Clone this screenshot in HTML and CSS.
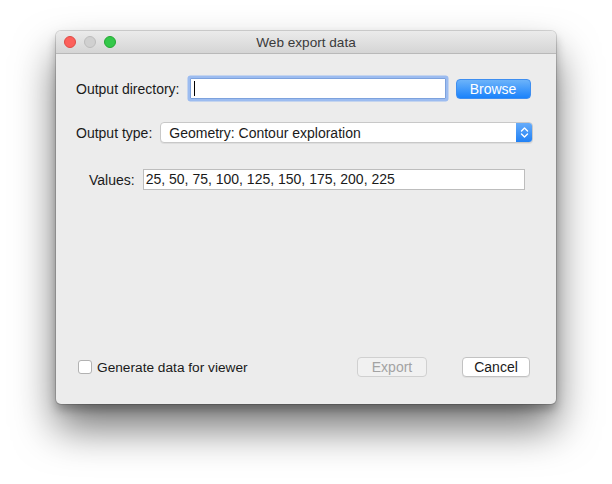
FILE: index.html
```html
<!DOCTYPE html>
<html>
<head>
<meta charset="utf-8">
<link rel="stylesheet" href="styles.css">
</head>
<body>
<div class="desk">
  <div class="window">
    <div class="titlebar">
      <div class="lights">
        <span class="light red"></span>
        <span class="light gray"></span>
        <span class="light green"></span>
      </div>
      <div class="title">Web export data</div>
    </div>
    <div class="content">
      <div class="row row1">
        <label class="lbl">Output directory:</label>
        <div class="field focus"><span class="caret"></span></div>
        <button class="btn primary">Browse</button>
      </div>
      <div class="row row2">
        <label class="lbl">Output type:</label>
        <div class="popup">
          <span class="popup-text">Geometry: Contour exploration</span>
          <span class="stepper">
            <svg width="9" height="13" viewBox="0 0 9 13"><path d="M1.5 5 L4.5 2 L7.5 5 M1.5 8 L4.5 11 L7.5 8" fill="none" stroke="#fff" stroke-width="1.4" stroke-linecap="round" stroke-linejoin="round"/></svg>
          </span>
        </div>
      </div>
      <div class="row row3">
        <label class="lbl">Values:</label>
        <div class="field values">25, 50, 75, 100, 125, 150, 175, 200, 225</div>
      </div>
      <div class="row bottom">
        <label class="check"><span class="box"></span>Generate data for viewer</label>
        <button class="btn disabled">Export</button>
        <button class="btn cancel">Cancel</button>
      </div>
    </div>
  </div>
</div>
</body>
</html>
```

FILE: styles.css
```css
html, body {
  margin: 0;
  padding: 0;
  background: #ffffff;
  height: 100%;
}
body {
  font-family: "Liberation Sans", Arial, sans-serif;
  font-size: 14px;
  color: #1a1a1a;
}
.desk {
  box-sizing: border-box;
  min-height: 484px;
  padding: 31px 56px 0 56px;
}
.window {
  width: 500px;
  height: 373px;
  background: #ececec;
  border-radius: 5px;
  box-shadow: 0 0 0 1px rgba(0,0,0,0.14), 0 24px 42px rgba(0,0,0,0.55), 0 6px 10px rgba(0,0,0,0.25);
  display: flex;
  flex-direction: column;
  overflow: hidden;
}
.titlebar {
  height: 22px;
  flex: none;
  background: linear-gradient(#ebebeb, #d5d5d5);
  border-bottom: 1px solid #b9b9b9;
  display: flex;
  align-items: center;
  position: relative;
}
.lights {
  display: flex;
  gap: 8px;
  padding-left: 8px;
}
.light {
  width: 12px;
  height: 12px;
  border-radius: 50%;
  box-sizing: border-box;
}
.red { background: #fc605b; border: 1px solid #de4a44; }
.gray { background: #d0d0d0; border: 1px solid #bcbcbc; }
.green { background: #34c84a; border: 1px solid #24a832; }
.title {
  position: absolute;
  left: 0;
  right: 0;
  text-align: center;
  font-size: 13.6px;
  color: #3a3a3a;
  top: 4px;
}
.content {
  flex: 1;
  display: flex;
  flex-direction: column;
  padding: 0 0 27px 20px;
}
.row {
  display: flex;
  align-items: center;
  height: 21px;
}
.row1 { margin-top: 24px; }
.row2 { margin-top: 23px; }
.row3 { margin-top: 26px; padding-left: 13px; }
.lbl {
  white-space: nowrap;
}
.field {
  box-sizing: border-box;
  background: #fff;
  border: 1px solid #bdbdbd;
  height: 21px;
}
.field.focus {
  width: 256px;
  margin-left: 10px;
  border: 1px solid #7da2dd;
  box-shadow: 0 0 0 2.5px #9cbcf0;
  border-radius: 1px;
  position: relative;
}
.caret {
  position: absolute;
  left: 3px;
  top: 2px;
  width: 1px;
  height: 15px;
  background: #000;
}
.btn {
  font-family: "Liberation Sans", Arial, sans-serif;
  font-size: 14px;
  box-sizing: border-box;
  height: 20px;
  border-radius: 4px;
  padding: 0;
  line-height: 18px;
}
.btn.primary {
  width: 75px;
  margin-left: 10px;
  color: #fff;
  background: linear-gradient(#6cb3fa, #1a82fb);
  border: 1px solid #3e8ef0;
}
.popup {
  box-sizing: border-box;
  width: 373px;
  height: 21px;
  margin-left: 8px;
  background: #fff;
  border: 1px solid #c8c8c8;
  border-radius: 4px;
  box-shadow: 0 1px 0 rgba(0,0,0,0.06);
  display: flex;
  align-items: center;
  overflow: hidden;
}
.popup-text {
  flex: 1;
  padding-left: 8px;
}
.stepper {
  width: 17px;
  height: 21px;
  margin-right: -1px;
  background: linear-gradient(#6aaefa, #1d7ff5);
  display: flex;
  align-items: center;
  justify-content: center;
}
.field.values {
  width: 382px;
  margin-left: 8px;
  padding-left: 2px;
  line-height: 19px;
}
.bottom {
  margin-top: auto;
  height: 20px;
}
.check {
  display: flex;
  align-items: center;
  padding-left: 2px;
  width: 279px;
  font-size: 13.7px;
}
.box {
  box-sizing: border-box;
  width: 14px;
  height: 14px;
  border: 1px solid #b2b2b2;
  border-radius: 3px;
  background: #fff;
  margin-right: 5px;
}
.btn.disabled {
  width: 70px;
  color: #a3a3a3;
  background: #f1f1f1;
  border: 1px solid #d0d0d0;
}
.btn.cancel {
  width: 68px;
  margin-left: 35px;
  color: #1a1a1a;
  background: #fff;
  border: 1px solid #c2c2c2;
  box-shadow: 0 1px 0 rgba(0,0,0,0.05);
}
```
